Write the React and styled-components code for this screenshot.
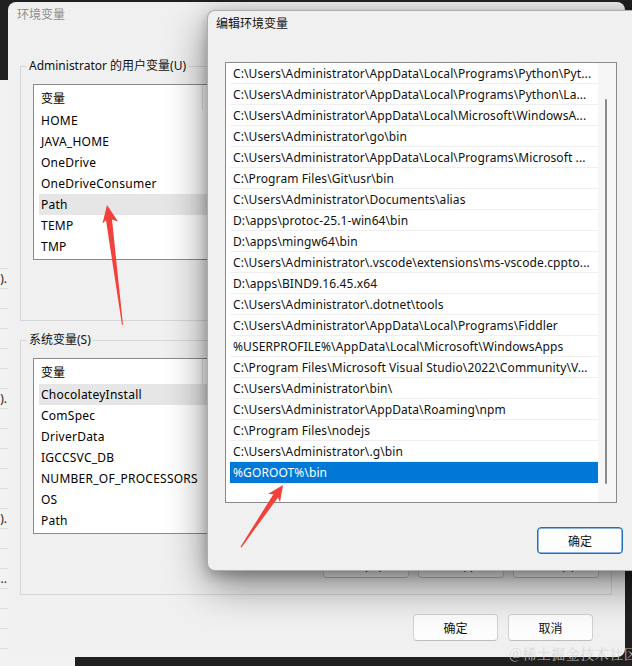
import React from 'react';
import styled, { createGlobalStyle } from 'styled-components';

const FONT = `"Noto Sans", "Noto Sans CJK SC", sans-serif`;

const GlobalStyle = createGlobalStyle`
  html, body { margin: 0; padding: 0; background: #202020; }
  body { font-family: ${FONT}; }
  * { box-sizing: border-box; }
`;

const Desktop = styled.div`
  position: relative;
  width: 632px;
  height: 666px;
  overflow: hidden;
  background: #202020;
  font-family: ${FONT};
  font-size: 12px;
  color: #000;
`;

/* ---------- window behind (only a strip visible) ---------- */
const BackWindow = styled.div`
  position: absolute;
  left: -225px;
  top: 80px;
  width: 300px;
  height: 600px;
  background: #f2f2f2;
  padding-top: 169px;
`;

const BackList = styled.div`
  width: 233px;
  display: flex;
  flex-direction: column;
`;

const BackRow = styled.div`
  height: 20px;
  line-height: 20px;
  text-align: right;
  padding-right: 1px;
  border-bottom: 1px solid #dcdcdc;
  color: #222;
  white-space: nowrap;
`;

/* ---------- shared window chrome ---------- */
const Window = styled.section`
  position: absolute;
  display: flex;
  flex-direction: column;
  background: #f0f0f0;
  border-radius: 8px;
`;

const EnvWindow = styled(Window)`
  left: 8px;
  top: 2px;
  width: 617px;
  height: 655px;
`;

const EditWindow = styled(Window)`
  left: 207px;
  top: 10px;
  width: 530px;
  height: 561px;
  border: 1px solid rgba(0, 0, 0, 0.28);
  box-shadow: 0 14px 40px rgba(0, 0, 0, 0.48), 0 4px 12px rgba(0, 0, 0, 0.22);
`;

const TitleBar = styled.div`
  height: 24px;
  display: flex;
  align-items: center;
  padding-left: ${(p) => p.$inset}px;
  color: ${(p) => (p.$active ? '#111' : '#8e8e8e')};
  font-size: 12px;
`;

/* ---------- env window body ---------- */
const EnvBody = styled.div`
  flex: 1;
  display: flex;
  flex-direction: column;
  padding: 32px 13px 16px 12px;
`;

const Group = styled.fieldset`
  margin: 0 0 ${(p) => p.$gap}px 0;
  padding: 0 12px 16px 12px;
  border: 1px solid #d6d6d6;
  min-width: 0;
  display: flex;
  flex-direction: column;
`;

const Legend = styled.legend`
  padding: 0 2px;
  margin-left: -6px;
  line-height: 16px;
  font-size: 12px;
  color: #111;
`;

const VarList = styled.div`
  margin-top: 10px;
  height: 176px;
  background: #fff;
  border: 1px solid #8a8a8a;
  padding-left: 5px;
  display: flex;
  flex-direction: column;
  overflow: hidden;
`;

const VarHeader = styled.div`
  height: 25px;
  flex: none;
  display: grid;
  grid-template-columns: 164px 1fr;
  align-items: stretch;
`;

const HeaderCell = styled.div`
  display: flex;
  align-items: center;
  padding-left: ${(p) => (p.$first ? 2 : 6)}px;
  border-right: ${(p) => (p.$first ? '1px solid #e3e3e3' : 'none')};
`;

const VarRow = styled.div`
  height: 21px;
  flex: none;
  display: grid;
  grid-template-columns: 164px 1fr;
  align-items: center;
  background: ${(p) => (p.$selected ? '#e6e6e6' : 'transparent')};
  white-space: nowrap;
  letter-spacing: 0.25px;
`;

const Cell = styled.span`
  padding-left: ${(p) => (p.$first ? 2 : 6)}px;
  overflow: hidden;
`;

const ButtonRow = styled.div`
  margin-top: 18px;
  display: flex;
  justify-content: flex-end;
  gap: 9px;
`;

const Button = styled.button`
  width: ${(p) => p.$w || 86}px;
  height: ${(p) => p.$h || 26}px;
  border-radius: 4px;
  background: #fdfdfd;
  border: 1px solid ${(p) => (p.$primary ? '#1f6fbf' : '#d0d0d0')};
  border-bottom-color: ${(p) => (p.$primary ? '#1f6fbf' : '#bdbdbd')};
  box-shadow: ${(p) => (p.$primary ? 'inset 0 0 0 0.5px #1f6fbf' : 'none')};
  font-family: ${FONT};
  font-size: 12px;
  color: #111;
  padding: 0;
`;

const Footer = styled.div`
  margin-top: ${(p) => p.$top}px;
  display: flex;
  justify-content: flex-end;
  gap: 10px;
  padding-right: ${(p) => p.$right}px;
`;

/* ---------- edit window body ---------- */
const EditBody = styled.div`
  display: flex;
  padding: 27px 0 0 17px;
  gap: 16px;
`;

const PathList = styled.div`
  width: 392px;
  height: 441px;
  flex: none;
  background: #fff;
  border: 1px solid #8a8a8a;
  display: flex;
`;

const PathRows = styled.div`
  flex: 1;
  min-width: 0;
  padding-left: 4px;
  display: flex;
  flex-direction: column;
`;

const PathRow = styled.div`
  height: 21px;
  flex: none;
  line-height: 20px;
  padding: 1px 0 0 3px;
  border-bottom: 1px solid ${(p) => (p.$selected ? '#0078d7' : '#efefef')};
  background: ${(p) => (p.$selected ? '#0078d7' : '#fff')};
  color: ${(p) => (p.$selected ? '#fff' : '#111')};
  white-space: nowrap;
  overflow: hidden;
  letter-spacing: 0.1px;
`;

const ScrollTrack = styled.div`
  width: 18px;
  flex: none;
  background: #f6f6f6;
  padding: 36px 0 0 7px;
`;

const ScrollThumb = styled.div`
  width: 2px;
  height: 385px;
  border-radius: 1px;
  background: #8a8a8a;
`;

const SideButtons = styled.div`
  display: flex;
  flex-direction: column;
  gap: 8px;
`;

/* ---------- overlays ---------- */
const ArrowLayer = styled.svg`
  position: absolute;
  left: 0;
  top: 0;
  width: 632px;
  height: 666px;
  pointer-events: none;
`;

const Watermark = styled.div`
  position: absolute;
  left: 509px;
  top: 643px;
  font-family: "Noto Serif CJK SC", "Noto Sans CJK SC", serif;
  font-size: 14px;
  color: rgba(210, 210, 210, 0.8);
  white-space: nowrap;
  letter-spacing: 0.5px;
`;

const userVars = [
  ['HOME', 'C:\\Users\\Administrator'],
  ['JAVA_HOME', 'C:\\Program Files\\Java\\jdk-17'],
  ['OneDrive', 'C:\\Users\\Administrator\\OneDrive'],
  ['OneDriveConsumer', 'C:\\Users\\Administrator\\OneDrive'],
  ['Path', 'C:\\Users\\Administrator\\AppData\\Local\\Programs\\Python'],
  ['TEMP', 'C:\\Users\\Administrator\\AppData\\Local\\Temp'],
  ['TMP', 'C:\\Users\\Administrator\\AppData\\Local\\Temp'],
];

const sysVars = [
  ['ChocolateyInstall', 'C:\\ProgramData\\chocolatey'],
  ['ComSpec', 'C:\\Windows\\system32\\cmd.exe'],
  ['DriverData', 'C:\\Windows\\System32\\Drivers\\DriverData'],
  ['IGCCSVC_DB', 'AQAAANCMnd8BFdERjHoAwE'],
  ['NUMBER_OF_PROCESSORS', '16'],
  ['OS', 'Windows_NT'],
  ['Path', 'C:\\Windows\\system32;C:\\Windows'],
];

const paths = [
  'C:\\Users\\Administrator\\AppData\\Local\\Programs\\Python\\Pyt...',
  'C:\\Users\\Administrator\\AppData\\Local\\Programs\\Python\\La...',
  'C:\\Users\\Administrator\\AppData\\Local\\Microsoft\\WindowsA...',
  'C:\\Users\\Administrator\\go\\bin',
  'C:\\Users\\Administrator\\AppData\\Local\\Programs\\Microsoft ...',
  'C:\\Program Files\\Git\\usr\\bin',
  'C:\\Users\\Administrator\\Documents\\alias',
  'D:\\apps\\protoc-25.1-win64\\bin',
  'D:\\apps\\mingw64\\bin',
  'C:\\Users\\Administrator\\.vscode\\extensions\\ms-vscode.cppto...',
  'D:\\apps\\BIND9.16.45.x64',
  'C:\\Users\\Administrator\\.dotnet\\tools',
  'C:\\Users\\Administrator\\AppData\\Local\\Programs\\Fiddler',
  '%USERPROFILE%\\AppData\\Local\\Microsoft\\WindowsApps',
  'C:\\Program Files\\Microsoft Visual Studio\\2022\\Community\\V...',
  'C:\\Users\\Administrator\\bin\\',
  'C:\\Users\\Administrator\\AppData\\Roaming\\npm',
  'C:\\Program Files\\nodejs',
  'C:\\Users\\Administrator\\.g\\bin',
  '%GOROOT%\\bin',
];

const backRows = ['', ').', '', '', '', '', '', ').', '', '', '', '', '', ').', '', '', '...', '', '', ''];

function VariableList({ rows, selected }) {
  return (
    <VarList>
      <VarHeader>
        <HeaderCell $first>变量</HeaderCell>
        <HeaderCell>值</HeaderCell>
      </VarHeader>
      {rows.map(([k, v], i) => (
        <VarRow key={k + i} $selected={i === selected}>
          <Cell $first>{k}</Cell>
          <Cell>{v}</Cell>
        </VarRow>
      ))}
    </VarList>
  );
}

export default function App() {
  return (
    <Desktop>
      <GlobalStyle />
      <BackWindow>
        <BackList>
          {backRows.map((t, i) => (
            <BackRow key={i}>{t}</BackRow>
          ))}
        </BackList>
      </BackWindow>

      <EnvWindow>
        <TitleBar $inset={9}>环境变量</TitleBar>
        <EnvBody>
          <Group $gap={11}>
            <Legend>Administrator 的用户变量(U)</Legend>
            <VariableList rows={userVars} selected={4} />
            <ButtonRow>
              <Button>新建(N)...</Button>
              <Button>编辑(E)...</Button>
              <Button>删除(D)</Button>
            </ButtonRow>
          </Group>
          <Group $gap={0}>
            <Legend>系统变量(S)</Legend>
            <VariableList rows={sysVars} selected={0} />
            <ButtonRow>
              <Button>新建(W)...</Button>
              <Button>编辑(I)...</Button>
              <Button>删除(L)</Button>
            </ButtonRow>
          </Group>
          <Footer $top={19} $right={19}>
            <Button $w={85} $h={27}>确定</Button>
            <Button $w={85} $h={27}>取消</Button>
          </Footer>
        </EnvBody>
      </EnvWindow>

      <EditWindow>
        <TitleBar $inset={8} $active>编辑环境变量</TitleBar>
        <EditBody>
          <PathList>
            <PathRows>
              {paths.map((p, i) => (
                <PathRow key={i} $selected={i === paths.length - 1}>
                  {p}
                </PathRow>
              ))}
            </PathRows>
            <ScrollTrack>
              <ScrollThumb />
            </ScrollTrack>
          </PathList>
          <SideButtons>
            <Button $w={86} $h={27}>新建(N)</Button>
            <Button $w={86} $h={27}>编辑(E)</Button>
            <Button $w={86} $h={27}>浏览(B)...</Button>
            <Button $w={86} $h={27}>删除(D)</Button>
            <Button $w={86} $h={27}>上移(U)</Button>
            <Button $w={86} $h={27}>下移(O)</Button>
            <Button $w={86} $h={27}>编辑文本(T)...</Button>
          </SideButtons>
        </EditBody>
        <Footer $top={24} $right={17}>
          <Button $w={86} $h={27} $primary>确定</Button>
          <Button $w={86} $h={27}>取消</Button>
        </Footer>
      </EditWindow>

      <ArrowLayer viewBox="0 0 632 666">
        <polygon
          fill="#f2403b"
          points="107,205 118,221.5 112,219.5 123,325 122,325 106,220.3 102.5,223.5"
        />
        <polygon
          fill="#f2403b"
          points="283,485 280,502.3 278,497.4 241.5,547.4 240.5,546.7 273.4,494.2 268,494"
        />
      </ArrowLayer>

      <Watermark>@稀土掘金技术社区</Watermark>
    </Desktop>
  );
}
